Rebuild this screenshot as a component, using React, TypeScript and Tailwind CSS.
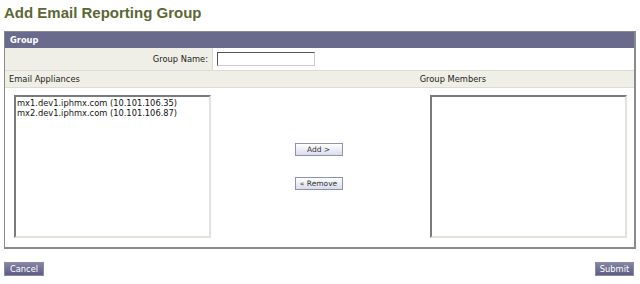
import { FC } from "react";

const font = { fontFamily: "'DejaVu Sans', Verdana, sans-serif" };

const ListBox: FC<{ items: string[] }> = ({ items }) => (
  <div className="w-[197px] h-[143px] bg-white border-2 border-t-[#7a7a7a] border-l-[#7a7a7a] border-b-[#e2e2dc] border-r-[#e2e2dc] px-[1px] pt-[1px] text-[8.3px] leading-[10px] text-[#111]">
    {items.map((item) => (
      <div key={item}>{item}</div>
    ))}
  </div>
);

const SmallButton: FC<{ label: string }> = ({ label }) => (
  <button className="w-[48px] h-[13px] flex items-center justify-center text-[7.5px] leading-none text-[#333] border border-[#8f93b0] bg-gradient-to-b from-white to-[#d9dcea]">
    {label}
  </button>
);

const DarkButton: FC<{ label: string; className?: string }> = ({ label, className = "" }) => (
  <button
    className={`h-[14px] flex items-center justify-center text-[8.3px] leading-none text-white border border-[#8a8aa6] bg-gradient-to-b from-[#8484a6] to-[#5d5d82] ${className}`}
  >
    {label}
  </button>
);

export default function App() {
  return (
    <div className="w-[640px] h-[284px] bg-white overflow-hidden" style={font}>
      <h1
        className="pl-[4px] pt-[2px] h-[31px] text-[15px] font-bold text-[#5b6833]"
        style={{ fontFamily: "'Liberation Sans', Arial, sans-serif" }}
      >
        Add Email Reporting Group
      </h1>

      <div className="mx-[4px] w-[632px] border border-[#8a8a8a] border-b-2 border-r-2">
        <div className="h-[16px] bg-[#6a6a8c] flex items-center pl-[5px] text-[8.3px] font-bold text-white">
          Group
        </div>

        <div className="flex h-[23px] border-b border-[#dcdcd2]">
          <div className="w-[208px] bg-[#efefe7] border-r border-[#dcdcd2] flex items-center justify-end pr-[4px] text-[8.3px] text-[#222]">
            Group Name:
          </div>
          <div className="flex-1 flex items-center pl-[4px]">
            <div className="w-[98px] h-[14px] bg-white border border-t-[#555] border-l-[#555] border-b-[#ccc] border-r-[#ccc]" />
          </div>
        </div>

        <div className="flex h-[17px] justify-between items-center bg-[#efefe7] border-b border-[#dcdcd2] pl-[4px] text-[8.3px] text-[#222]">
          <span>Email Appliances</span>
          <span className="mr-[148px]">Group Members</span>
        </div>

        <div className="flex h-[159px] pt-[7px] pl-[9px] pr-[7px]">
          <ListBox items={["mx1.dev1.iphmx.com (10.101.106.35)", "mx2.dev1.iphmx.com (10.101.106.87)"]} />
          <div className="flex-1 flex flex-col items-center pt-[48px] gap-[21px] pr-[4px]">
            <SmallButton label="Add >" />
            <SmallButton label="« Remove" />
          </div>
          <ListBox items={[]} />
        </div>
      </div>

      <div className="flex justify-between mx-[4px] w-[630px] mt-[13px]">
        <DarkButton label="Cancel" className="w-[40px]" />
        <DarkButton label="Submit" className="w-[39px]" />
      </div>
    </div>
  );
}
